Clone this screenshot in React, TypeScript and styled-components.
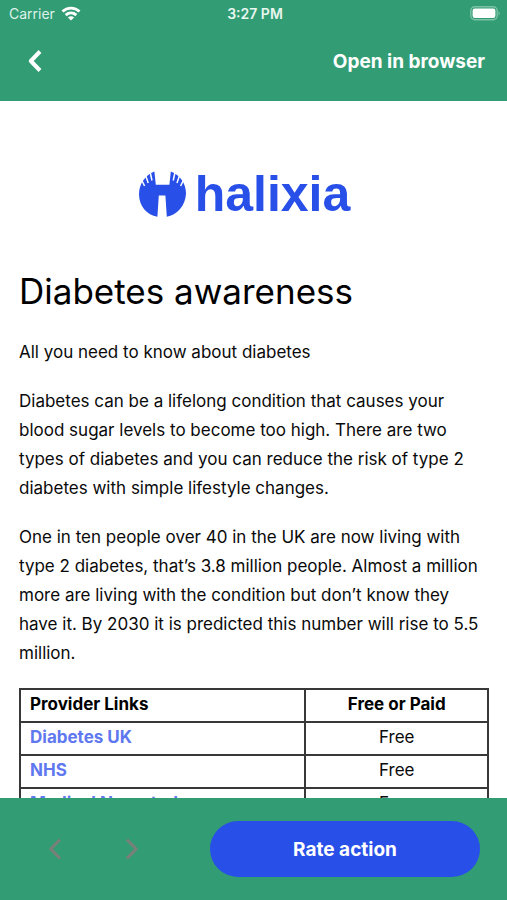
import React from 'react';
import styled, { createGlobalStyle } from 'styled-components';

const GlobalStyle = createGlobalStyle`
  *, *::before, *::after { box-sizing: border-box; }
  body {
    margin: 0;
    background: #fff;
    color: #0a0a0a;
    font-family: Inter, "Liberation Sans", sans-serif;
    font-size: 17px;
    line-height: 29px;
  }
`;

const green = '#329d74';
const blue = '#2850e8';

const Screen = styled.div`
  display: flex;
  flex-direction: column;
  height: 100vh;
`;

const Header = styled.header`
  flex: none;
  background: ${green};
  color: #fff;
`;

const StatusBar = styled.div`
  display: grid;
  grid-template-columns: 1fr auto 1fr;
  align-items: center;
  height: 27px;
  padding: 0 6px 0 9px;
  font-size: 14px;
  line-height: 20px;
`;

const Carrier = styled.div`
  display: flex;
  align-items: center;
  gap: 6px;
  color: #dff2ea;
`;

const Clock = styled.time`
  font-weight: 600;
  color: #e9f7f1;
`;

const Battery = styled.div`
  display: flex;
  justify-content: flex-end;
`;

const NavBar = styled.nav`
  display: flex;
  align-items: center;
  justify-content: space-between;
  height: 74px;
  padding: 0 22px 6px 19px;
`;

const IconButton = styled.button<{ $color: string }>`
  display: flex;
  align-items: center;
  justify-content: center;
  width: 32px;
  height: 40px;
  padding: 0;
  border: 0;
  background: none;
  color: ${({ $color }) => $color};
`;

const HeaderLink = styled.a`
  color: #fff;
  font-size: 19px;
  font-weight: 700;
  text-decoration: none;
`;

const Content = styled.main`
  flex: 1;
  min-height: 0;
  overflow-y: auto;
  scrollbar-width: none;
  padding: 68px 18px 20px 19px;
`;

const Logo = styled.div`
  display: flex;
  align-items: center;
  justify-content: center;
  gap: 8px;
  height: 50px;
  padding-right: 20px;
  color: ${blue};
  font: bold 50px/50px "Liberation Sans", Arial, sans-serif;
`;

const Title = styled.h1`
  margin: 47px 0 22px;
  font-size: 35px;
  line-height: 50px;
  font-weight: 400;
  color: #000;
`;

const Paragraph = styled.p`
  margin: 0 0 20px;
`;

const Table = styled.table`
  width: 100%;
  border-collapse: collapse;
  table-layout: fixed;
  line-height: 23px;
`;

const Cell = styled.td<{ $center?: boolean }>`
  width: ${({ $center }) => ($center ? '39%' : '61%')};
  padding: 3px 9px 5px;
  border: 2px solid #383838;
  text-align: ${({ $center }) => ($center ? 'center' : 'left')};
`;

const HeadCell = styled(Cell).attrs({ as: 'th', scope: 'col' })`
  font-weight: 700;
  color: #000;
`;

const ProviderLink = styled.a`
  color: #6078ef;
  font-weight: 700;
  text-decoration: none;
`;

const Footer = styled.footer`
  flex: none;
  display: flex;
  align-items: center;
  justify-content: space-between;
  gap: 24px;
  height: 102px;
  padding: 0 27px 0 39px;
  background: ${green};
`;

const History = styled.div`
  display: flex;
  gap: 45px;
`;

const RateButton = styled.button`
  flex: 0 1 270px;
  height: 56px;
  padding: 0;
  border: 0;
  border-radius: 28px;
  background: ${blue};
  color: #fff;
  font: 700 19px/29px Inter, "Liberation Sans", sans-serif;
`;

const Chevron = ({ right, stroke }: { right?: boolean; stroke: number }) => (
  <svg width="14" height="22" viewBox="0 0 14 22" fill="none" stroke="currentColor" strokeWidth={stroke} strokeLinejoin="round" aria-hidden="true">
    <path d={right ? 'M2 1.5 L11.2 11 L2 20.5' : 'M12 1.5 L2.8 11 L12 20.5'} />
  </svg>
);

const WifiIcon = () => (
  <svg width="20" height="15" viewBox="0 0 20 15" fill="none" stroke="#fff" strokeWidth="2.8" aria-label="Wi-Fi">
    <path d="M1.5 5.6 C6.3 .9 13.7 .9 18.5 5.6" />
    <path d="M4.7 9.1 C7.8 6.3 12.2 6.3 15.3 9.1" />
    <path d="M10 14.6 L6.9 11.5 C8.7 9.9 11.3 9.9 13.1 11.5 Z" fill="#fff" stroke="none" />
  </svg>
);

const BatteryIcon = () => (
  <svg width="31" height="15" viewBox="0 0 31 15" aria-label="Battery full">
    <rect x=".8" y=".8" width="26.4" height="13" rx="4" fill="none" stroke="#7cc2a6" strokeWidth="1.4" />
    <rect x="2.6" y="2.6" width="22.8" height="9.4" rx="2.2" fill="#fff" />
    <path d="M28.6 5.2 Q30.6 7.3 28.6 9.4 Z" fill="#8fcab3" />
  </svg>
);

const LogoMark = () => (
  <svg width="49" height="48" viewBox="0 0 49 48" aria-hidden="true">
    <path
      fill={blue}
      d="M16.4 1.5 L17.8 14.8 H31.4 L32.8 1.5 C42 5 48 13.5 48 23.5 C47.5 36 38.5 45 28.8 46.8 L27.4 25.5 H20.8 L19.4 46.8
         C9 45 1.2 36.5 1 24.5 C1 13.5 7.5 5 16.4 1.5 Z"
    />
    <g stroke="#fff" strokeWidth="1.5">
      <path d="M12 1.5 L14 10.5 M7.4 4.8 L10.2 13 M3.2 9 L6.6 16" />
      <path d="M37.2 1.5 L35.2 10.5 M41.8 4.8 L39 13 M46 9 L42.6 16" />
    </g>
  </svg>
);

const providers = [
  { name: 'Diabetes UK', price: 'Free' },
  { name: 'NHS', price: 'Free' },
  { name: 'Medical News today', price: 'Free' },
];

export default function App() {
  return (
    <>
      <GlobalStyle />
      <Screen>
        <Header>
          <StatusBar>
            <Carrier>Carrier <WifiIcon /></Carrier>
            <Clock>3:27 PM</Clock>
            <Battery><BatteryIcon /></Battery>
          </StatusBar>
          <NavBar>
            <IconButton $color="#fff" type="button" aria-label="Back"><Chevron stroke={4} /></IconButton>
            <HeaderLink href="#browser">Open in browser</HeaderLink>
          </NavBar>
        </Header>
        <Content>
          <Logo><LogoMark />halixia</Logo>
          <Title>Diabetes awareness</Title>
          <Paragraph>All you need to know about diabetes</Paragraph>
          <Paragraph>
            Diabetes can be a lifelong condition that causes your blood sugar levels to become too high. There are two
            types of diabetes and you can reduce the risk of type 2 diabetes with simple lifestyle changes.
          </Paragraph>
          <Paragraph>
            One in ten people over 40 in the UK are now living with type 2 diabetes, that’s 3.8 million people. Almost a
            million more are living with the condition but don’t know they have it. By 2030 it is predicted this number
            will rise to 5.5 million.
          </Paragraph>
          <Table>
            <thead>
              <tr>
                <HeadCell>Provider Links</HeadCell>
                <HeadCell $center>Free or Paid</HeadCell>
              </tr>
            </thead>
            <tbody>
              {providers.map(({ name, price }) => (
                <tr key={name}>
                  <Cell><ProviderLink href="#provider">{name}</ProviderLink></Cell>
                  <Cell $center>{price}</Cell>
                </tr>
              ))}
            </tbody>
          </Table>
        </Content>
        <Footer>
          <History>
            <IconButton $color="#7b7f7a" type="button" aria-label="Previous page" disabled><Chevron stroke={3} /></IconButton>
            <IconButton $color="#7b7f7a" type="button" aria-label="Next page" disabled><Chevron right stroke={3} /></IconButton>
          </History>
          <RateButton type="button">Rate action</RateButton>
        </Footer>
      </Screen>
    </>
  );
}
